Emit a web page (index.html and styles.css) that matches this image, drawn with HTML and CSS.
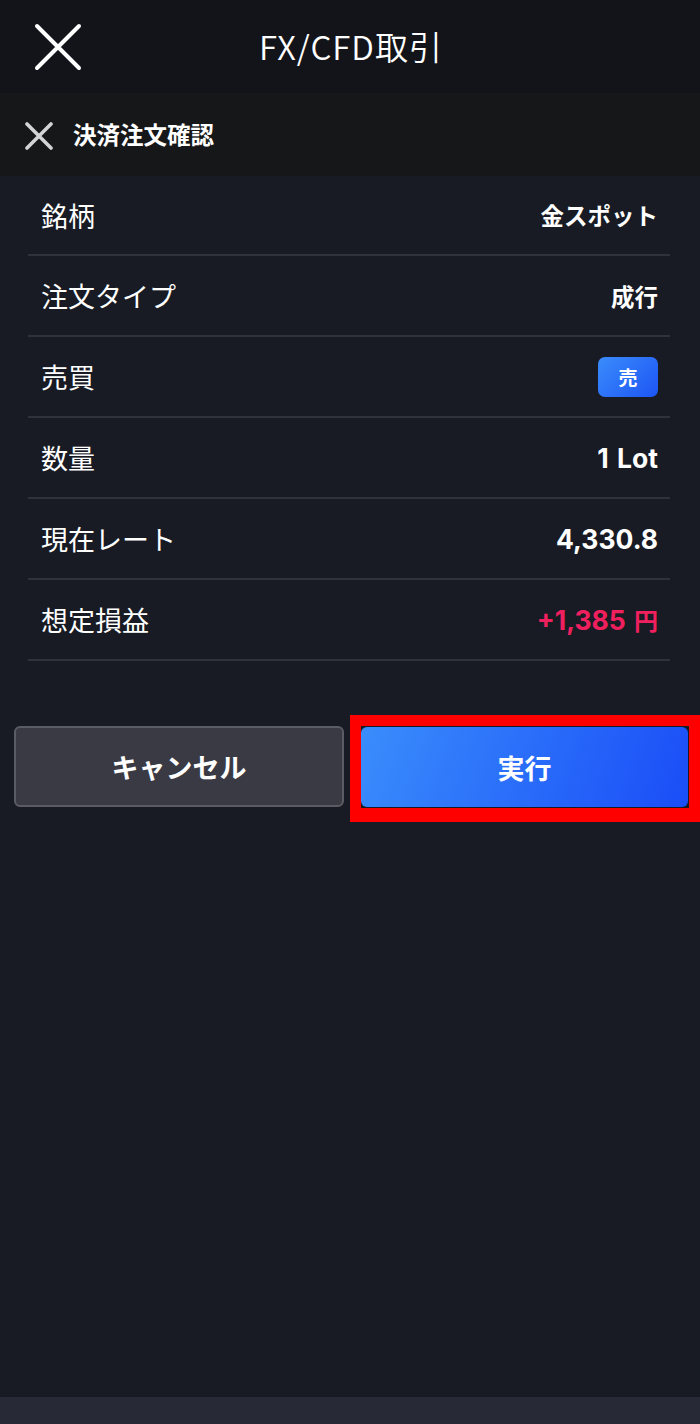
FILE: index.html
```html
<!DOCTYPE html>
<html lang="ja">

<head>
    <meta charset="UTF-8">
    <meta name="viewport" content="width=device-width, initial-scale=1.0">
    <title>FX/CFD取引 - 決済注文確認</title>
    <link rel="stylesheet" href="styles.css">
</head>

<body>
    <div class="app">
        <header class="topbar">
            <button class="close-btn" aria-label="閉じる">
                <svg width="48" height="48" viewBox="0 0 48 48">
                    <path d="M3 3 L45 45 M45 3 L3 45" stroke="#fff" stroke-width="4" stroke-linecap="round" fill="none"/>
                </svg>
            </button>
            <h1 class="title">FX/CFD取引</h1>
        </header>

        <div class="subbar">
            <svg class="sub-close" width="28" height="28" viewBox="0 0 28 28">
                <path d="M2 2 L26 26 M26 2 L2 26" stroke="#d4d4d6" stroke-width="3.6" stroke-linecap="round" fill="none"/>
            </svg>
            <span class="subtitle">決済注文確認</span>
        </div>

        <main class="content">
            <div class="rows">
                <div class="row">
                    <span class="label">銘柄</span>
                    <span class="value">金スポット</span>
                </div>
                <div class="row">
                    <span class="label">注文タイプ</span>
                    <span class="value">成行</span>
                </div>
                <div class="row">
                    <span class="label">売買</span>
                    <span class="badge">売</span>
                </div>
                <div class="row">
                    <span class="label">数量</span>
                    <span class="value num">1 Lot</span>
                </div>
                <div class="row">
                    <span class="label">現在レート</span>
                    <span class="value num">4,330.8</span>
                </div>
                <div class="row">
                    <span class="label">想定損益</span>
                    <span class="value num profit">+1,385 <span class="yen">円</span></span>
                </div>
            </div>

            <div class="actions">
                <button class="cancel">キャンセル</button>
                <div class="execute-wrap">
                    <button class="execute">実行</button>
                    <div class="highlight"></div>
                </div>
            </div>
        </main>

        <div class="bottombar"></div>
    </div>
</body>

</html>
```

FILE: styles.css
```css
* {
    margin: 0;
    padding: 0;
    box-sizing: border-box;
    font-family: "Noto Sans CJK JP", "Noto Sans", sans-serif;
}

body {
    background: #181b24;
    width: 700px;
    height: 1424px;
    overflow: hidden;
}

.app {
    display: flex;
    flex-direction: column;
    height: 1424px;
}

.topbar {
    height: 93px;
    background: #13141a;
    display: flex;
    align-items: center;
    justify-content: center;
    position: relative;
}

.close-btn {
    position: absolute;
    left: 34px;
    top: 23px;
    border: none;
    background: none;
    width: 48px;
    height: 48px;
}

.close-btn svg {
    display: block;
}

.title {
    color: #fff;
    font-size: 33px;
    font-weight: 350;
    letter-spacing: 1px;
    margin-top: -2px;
    margin-left: 2px;
}

.subbar {
    height: 83px;
    background: #161719;
    display: flex;
    align-items: center;
    padding-left: 25px;
    gap: 20px;
}

.sub-close {
    display: block;
    margin-top: 2px;
}

.subtitle {
    color: #fff;
    font-size: 23.5px;
    font-weight: 700;
    margin-top: -1px;
}

.content {
    flex: 1;
    display: flex;
    flex-direction: column;
}

.rows {
    padding: 0 30px 0 28px;
}

.row {
    height: 81px;
    border-bottom: 2px solid #2f323b;
    display: flex;
    align-items: center;
    justify-content: space-between;
    padding: 0 12px 0 13px;
}

.row:first-child {
    height: 80px;
}

.label {
    color: #fff;
    font-size: 27px;
    font-weight: 400;
}

.value {
    color: #fff;
    font-size: 23.5px;
    font-weight: 700;
}

.num {
    font-family: "Inter", "Noto Sans CJK JP", sans-serif;
    font-size: 26.5px;
    font-weight: 700;
    word-spacing: 2px;
}

.profit {
    color: #f0205f;
}

.yen {
    font-family: "Noto Sans CJK JP", sans-serif;
    font-size: 24px;
}

.badge {
    width: 60px;
    height: 40px;
    border-radius: 7px;
    background: linear-gradient(135deg, #3a8cfb, #1d55f5);
    color: #fff;
    font-size: 19px;
    font-weight: 700;
    display: flex;
    align-items: center;
    justify-content: center;
}

.actions {
    display: flex;
    padding: 0 12px 0 14px;
    margin-top: 65px;
    gap: 17px;
}

.cancel {
    width: 330px;
    height: 81px;
    background: #3a3a44;
    border: 2px solid #5b5b63;
    border-radius: 6px;
    color: #fff;
    font-size: 27px;
    font-weight: 700;
}

.execute-wrap {
    position: relative;
    width: 327px;
    height: 81px;
    margin-top: 1px;
}

.execute {
    width: 100%;
    height: 80px;
    border: none;
    border-radius: 6px;
    background: linear-gradient(110deg, #3a8dfc, #1a4df7);
    color: #fff;
    font-size: 27px;
    font-weight: 700;
}

.highlight {
    position: absolute;
    left: -11px;
    top: -12px;
    width: 350px;
    height: 107px;
    border: 11px solid #ff0000;
    border-bottom-width: 14px;
    pointer-events: none;
}

.bottombar {
    height: 27px;
    background: #272a36;
}
```
